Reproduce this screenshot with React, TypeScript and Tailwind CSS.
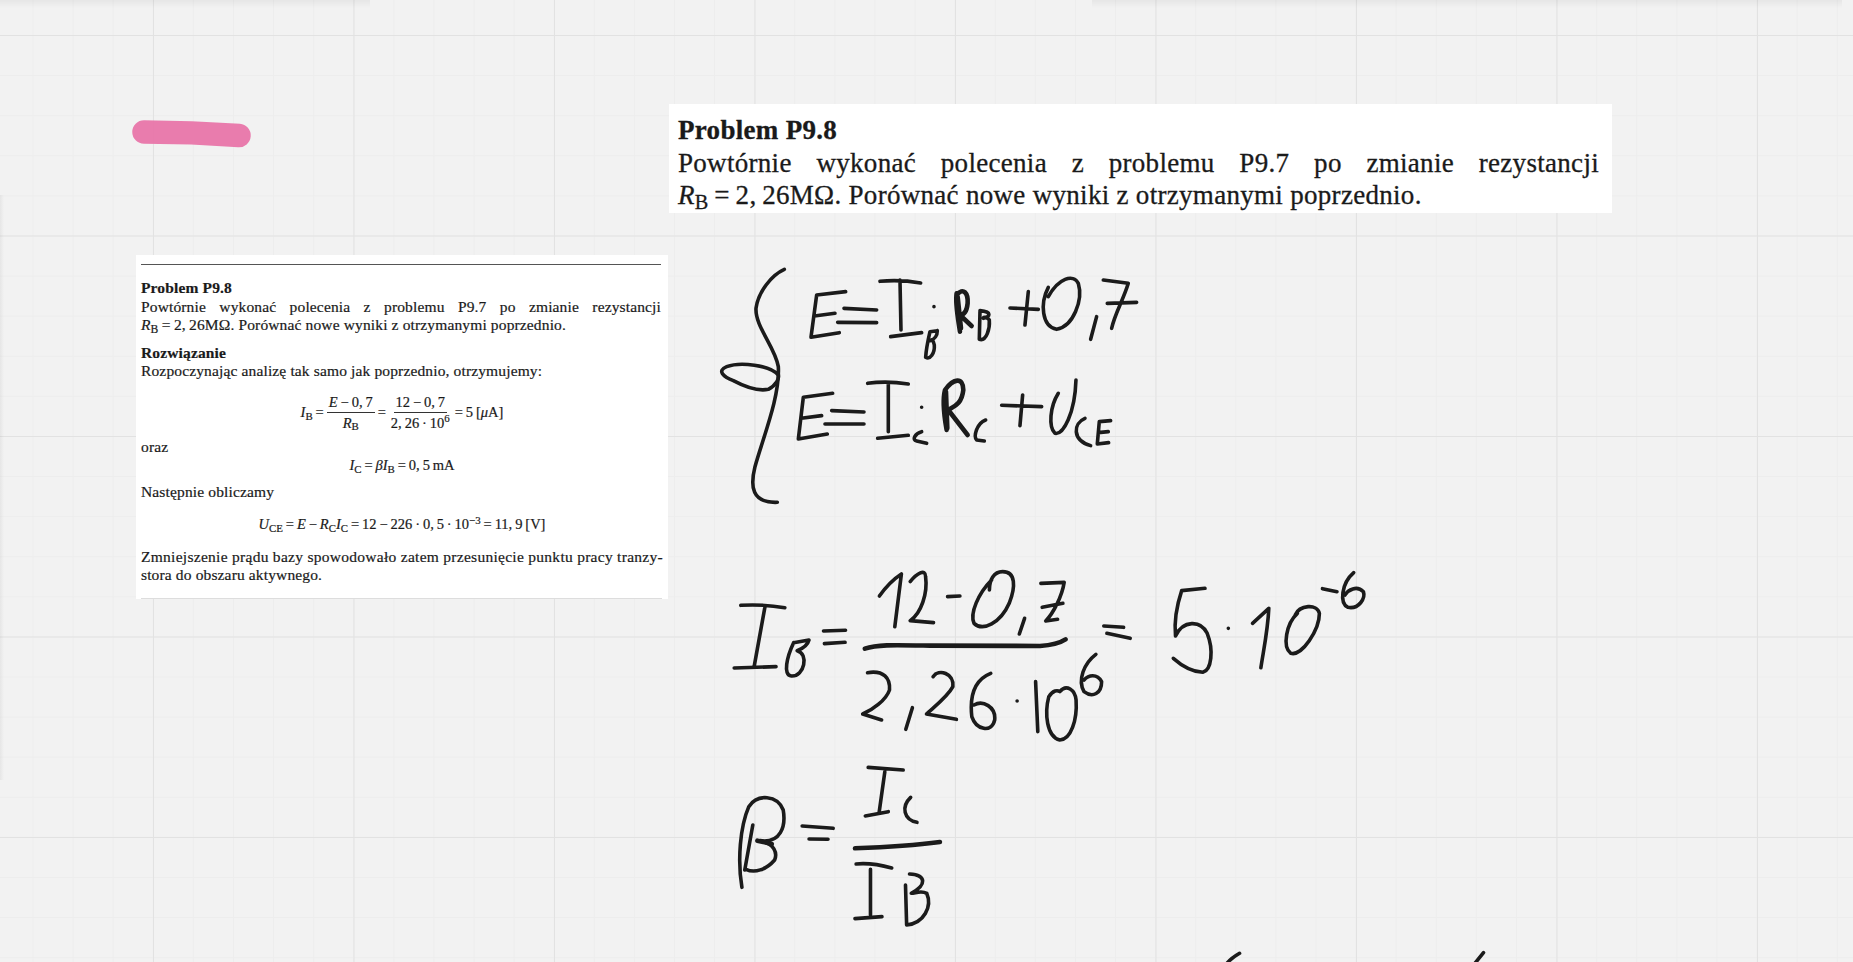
const serif = "font-['Liberation_Serif',serif]";
const t = "\u2009"; // wąska spacja w równaniach

function Rb() {
  return (
    <>
      <i>R</i>
      <sub>B</sub>
    </>
  );
}

// ułamek w równaniu
function Frac({ top, bottom }: { top: React.ReactNode; bottom: React.ReactNode }) {
  return (
    <span className="inline-flex flex-col items-center mx-[3px] align-middle">
      <span className="px-0.5 leading-[20px] border-b border-[#333]">{top}</span>
      <span className="px-0.5 leading-[21px]">{bottom}</span>
    </span>
  );
}

function SolutionCard() {
  return (
    <div className={`absolute left-[136px] top-[255px] w-[532px] h-[344px] bg-white px-[5px] text-[15.5px] tracking-[0.14px] leading-[18.5px] text-[#1a1a1a] [-webkit-text-stroke:0.2px_#1a1a1a] ${serif}`}>
      <div className="mt-[8.5px] h-[1.5px] bg-[#555] mr-[2px]" />
      <div className="mt-[14px] font-bold">Problem P9.8</div>
      <div className="[text-align-last:justify] mr-[2px]">Powtórnie wykonać polecenia z problemu P9.7 po zmianie rezystancji</div>
      <div>
        <Rb />{t}={t}2,{t}26MΩ. Porównać nowe wyniki z otrzymanymi poprzednio.
      </div>
      <div className="mt-[9px] font-bold">Rozwiązanie</div>
      <div>Rozpoczynając analizę tak samo jak poprzednio, otrzymujemy:</div>
      <div className="mt-[9px] mb-[2px] h-[46px] flex items-center justify-center whitespace-nowrap text-[14.5px] tracking-normal">
        <span>
          <i>I</i>
          <sub>B</sub>{t}=
        </span>
        <Frac
          top={
            <>
              <i>E</i>{t}−{t}0,{t}7
            </>
          }
          bottom={<Rb />}
        />
        <span>=</span>
        <Frac
          top={`12${t}−${t}0,${t}7`}
          bottom={
            <>
              2,{t}26{t}·{t}10<sup>6</sup>
            </>
          }
        />
        <span>={t}5{t}[<i>μ</i>A]</span>
      </div>
      <div className="mt-[1px]">oraz</div>
      <div className="text-center text-[14.5px] tracking-normal">
        <i>I</i>
        <sub>C</sub>{t}={t}<i>βI</i>
        <sub>B</sub>{t}={t}0,{t}5{t}mA
      </div>
      <div className="mt-[8px]">Następnie obliczamy</div>
      <div className="mt-[14px] text-center text-[14.5px] tracking-normal">
        <i>U</i>
        <sub>CE</sub>{t}={t}<i>E</i>{t}−{t}<i>R</i>
        <sub>C</sub>
        <i>I</i>
        <sub>C</sub>{t}={t}12{t}−{t}226{t}·{t}0,{t}5{t}·{t}10<sup>−3</sup>{t}={t}11,{t}9{t}[V]
      </div>
      <div className="mt-[14px] whitespace-nowrap tracking-[0.28px]">Zmniejszenie prądu bazy spowodowało zatem przesunięcie punktu pracy tranzy-</div>
      <div>stora do obszaru aktywnego.</div>
      <div className="absolute left-[5px] right-[6px] bottom-0 h-[1px] bg-[#ddd]" />
    </div>
  );
}

function TaskCard() {
  return (
    <div className={`absolute left-[669px] top-[104px] w-[943px] h-[109px] bg-white pl-[9px] pr-[13px] pt-[10px] text-[27px] tracking-[0.3px] leading-[32.5px] text-[#1a1a1a] [-webkit-text-stroke:0.3px_#1a1a1a] ${serif}`}>
      <div className="font-bold">Problem P9.8</div>
      <div className="[text-align-last:justify]">Powtórnie wykonać polecenia z problemu P9.7 po zmianie rezystancji</div>
      <div>
        <Rb />{t}={t}2,{t}26MΩ. Porównać nowe wyniki z otrzymanymi poprzednio.
      </div>
    </div>
  );
}

// pismo odręczne, współrzędne z powiększonych wycinków
function Ink() {
  const common = {
    fill: "none",
    stroke: "#1b1b1b",
    strokeLinecap: "round" as const,
    strokeLinejoin: "round" as const,
    vectorEffect: "non-scaling-stroke" as const,
  };
  const thin = { ...common, strokeWidth: 3.6 };
  const thick = { ...common, strokeWidth: 4.6 };
  return (
    <svg className="absolute inset-0 pointer-events-none" width="1853" height="962">
      <path d="M144 132 C175 132 205 133 239 135.5" fill="none" stroke="#e878aa" strokeWidth="23.5" strokeLinecap="round" opacity="0.97" />

      <g transform="translate(700 250) scale(0.3333)">
        <path {...thin} d="M253 58 C215 75 175 125 168 175 C165 230 225 290 235 350 C240 440 190 560 165 650 C150 710 155 760 232 757" />
        <path {...thin} d="M235 375 C210 345 120 335 80 350 C50 362 70 380 100 392 C130 408 170 425 205 418 C230 405 238 385 235 375" />
        <path {...thin} d="M437 125 L350 135 L333 262 L418 248 M343 198 L405 190 M432 175 L530 180 M413 217 L530 218" />
        <path {...thin} d="M540 94 Q600 88 662 99 M600 90 L603 240 M572 260 L665 248 M702 170 L702 170" />
        <path {...thin} d="M712 242 L690 245 C682 280 678 305 677 322 C690 330 705 310 703 285 C700 270 695 268 690 272 C705 268 712 255 712 242" />
        <path {...thick} d="M770 130 C765 160 775 210 780 245 M770 135 C790 110 805 130 803 160 C800 190 790 195 780 195 L815 228 M773 140 L783 235" />
        <path {...thin} d="M840 185 L838 268 C860 275 870 235 868 210 C860 200 850 200 850 205 C870 200 878 185 840 182" />
        <path {...thin} d="M930 174 L1015 178 M985 125 L975 225" />
        <path {...thin} d="M1045 112 C1020 160 1025 230 1070 238 C1120 230 1150 150 1135 100 C1120 70 1075 85 1045 140" />
        <path {...thin} d="M1190 200 L1172 268 M1210 90 L1285 100 C1270 150 1245 190 1235 235 M1222 160 L1310 157" />

        <path {...thin} d="M398 430 L310 442 L295 567 L382 552 M304 505 L365 497 M395 482 L492 486 M375 522 L492 522" />
        <path {...thin} d="M503 400 Q560 392 625 402 M565 397 L565 545 M533 565 L625 556 M665 472 L665 472" />
        <path {...thin} d="M665 545 C645 550 635 570 650 573 L680 580" />
        <path {...thick} d="M735 420 C725 460 735 510 740 540 M735 420 C760 385 790 380 790 420 C785 465 760 470 745 480 L803 555 M738 425 L742 535" />
        <path {...thin} d="M857 510 C830 520 820 560 830 570 L853 573" />
        <path {...thin} d="M905 466 L1025 470 M968 435 L960 527" />
        <path {...thin} d="M1075 430 C1050 470 1045 530 1065 550 C1090 555 1125 490 1128 390" />
        <path {...thin} d="M1155 505 C1120 520 1115 570 1172 587 M1232 512 L1198 515 L1192 582 L1226 578 M1195 548 L1225 545" />
      </g>

      <g transform="translate(710 550) scale(0.44 0.3333)">
        <path {...thin} d="M70 166 Q120 162 170 173 M125 170 L100 352 M55 354 L150 350" />
        <path {...thin} d="M190 278 L225 270 C222 285 212 295 198 302 C225 310 215 380 185 378 C165 375 175 320 190 278" />
        <path {...thin} d="M258 243 L308 241 M260 281 L307 277" />
        <path {...thin} d="M385 138 C400 110 420 85 435 72 L420 230" />
        <path {...thin} d="M455 95 C470 70 490 55 490 80 C495 130 480 190 455 212 L508 218" />
        <path {...thin} d="M540 140 L568 138" />
        <path {...thin} d="M640 90 C610 130 590 190 600 220 C620 245 660 220 680 160 C695 110 695 65 665 65 C645 65 635 90 635 120" />
        <path {...thin} d="M715 205 L703 252 M752 100 L805 97 C800 140 780 190 763 213 L790 208 M755 172 L802 160" />
        <path {...thick} d="M352 296 C380 283 420 285 500 287 L750 288 C780 285 800 275 808 268" />
        <path {...thin} d="M358 368 C395 360 410 385 408 420 C400 450 370 480 347 492 L390 510 M460 473 L445 538" />
        <path {...thin} d="M507 380 C520 355 555 370 552 410 C540 440 510 470 492 492 L560 508" />
        <path {...thin} d="M638 370 C600 390 590 440 595 500 C605 540 640 550 647 510 C650 470 620 450 600 465 M698 453 L698 453" />
        <path {...thin} d="M740 395 L745 545 M795 425 C810 400 830 420 832 450 C835 510 820 570 795 570 C765 560 760 490 770 440 C780 420 790 420 795 425" />
        <path {...thin} d="M877 313 C850 340 835 390 850 425 C870 445 890 430 890 395 C880 370 860 375 850 390" />
        <path {...thin} d="M895 228 L940 232 M902 250 L955 265" />
        <path {...thin} d="M1125 115 L1072 122 C1060 170 1055 220 1058 258 C1075 210 1115 210 1130 250 C1145 300 1140 360 1120 367 C1095 365 1070 345 1053 325 M1178 235 L1178 235" />
        <path {...thin} d="M1233 220 L1270 175 C1268 240 1258 300 1252 353" />
        <path {...thin} d="M1335 190 C1310 220 1300 290 1320 310 C1345 320 1385 240 1385 190 C1380 160 1340 165 1330 195" />
        <path {...thin} d="M1392 116 L1425 125 M1463 68 C1435 100 1430 160 1450 172 C1475 178 1490 145 1485 125 C1470 105 1450 120 1443 135" />
      </g>

      <g transform="translate(700 750) scale(0.574 0.3333)">
        <path {...thin} d="M73 412 C65 330 70 230 85 170 C100 130 135 135 145 180 C150 230 140 280 105 272 C130 280 135 310 130 330 C115 360 95 370 80 358 M92 225 L78 360" />
        <path {...thick} d="M100 272 L125 282" />
        <path {...thin} d="M178 228 L232 235 M190 267 L223 268" />
        <path {...thin} d="M293 52 L354 60 M322 65 L312 188 M288 198 L328 185 M367 142 C350 170 355 210 378 217" />
        <path {...thick} d="M270 295 C320 292 380 285 418 276" />
        <path {...thin} d="M272 342 C295 338 315 345 334 354 M297 358 L297 495 M270 506 L317 500" />
        <path {...thin} d="M358 405 L360 525 C390 520 405 470 395 430 C385 420 375 430 368 430 C395 405 395 375 365 372" />
        <path {...thin} d="M940 610 C930 620 925 625 918 640 M1365 608 L1350 640" />
      </g>
    </svg>
  );
}

export default function App() {
  return (
    <div className="relative w-screen h-screen overflow-hidden bg-[#f2f2f2] [background-image:linear-gradient(#e2e2e2_1px,transparent_1px),linear-gradient(90deg,#e2e2e2_1px,transparent_1px),linear-gradient(#ededed_1px,transparent_1px),linear-gradient(90deg,#ededed_1px,transparent_1px)] [background-size:200.5px_200.5px,200.5px_200.5px,40.1px_40.1px,40.1px_40.1px] [background-position:0_35px,153px_0,0_35px,32.5px_0]">
      {/* cienie pasków narzędzi przy krawędziach */}
      <div className="absolute left-0 top-0 w-[370px] h-[8px] bg-gradient-to-b from-black/5 to-transparent" />
      <div className="absolute left-[1092px] top-0 w-[750px] h-[8px] bg-gradient-to-b from-black/5 to-transparent" />
      <div className="absolute left-0 top-[195px] w-[4px] h-[585px] bg-gradient-to-r from-black/5 to-transparent" />

      <SolutionCard />
      <TaskCard />
      <Ink />
    </div>
  );
}
